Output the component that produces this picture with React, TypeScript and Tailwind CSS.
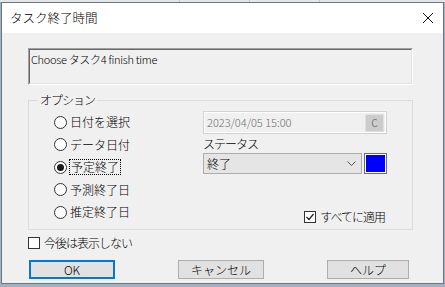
// TaskFinishDialog — ダイアログ「タスク終了時間」
import type { ReactNode } from 'react';

const FONT = '"Noto Sans CJK JP", "Liberation Sans", sans-serif';

function Radio({ label, checked, focus }: { label: string; checked?: boolean; focus?: boolean }) {
  return (
    <div className="flex h-[22.5px] items-center">
      <span className="grid h-[13px] w-[13px] shrink-0 place-items-center rounded-full border border-[#333333] bg-white">
        {checked && <span className="h-[7px] w-[7px] rounded-full bg-[#1a1a1a]" />}
      </span>
      <span
        className={
          focus
            ? 'ml-[2px] border border-dotted border-black px-[1px] text-[12px] font-light leading-[14px] text-black'
            : 'ml-[3px] text-[12px] font-light leading-[14px] text-black'
        }
      >
        {label}
      </span>
    </div>
  );
}

function Check({ checked, children }: { checked?: boolean; children: ReactNode }) {
  return (
    <div className="flex items-center">
      <span className="grid h-[12px] w-[12px] shrink-0 place-items-center border border-[#333333] bg-white">
        {checked && (
          <svg width="10" height="10" viewBox="0 0 10 10">
            <path d="M1.5 5 L4 7.5 L8.5 2" fill="none" stroke="#222" strokeWidth="1.2" />
          </svg>
        )}
      </span>
      <span className="ml-[4px] text-[12px] font-light leading-[14px] tracking-[-1px] text-black">{children}</span>
    </div>
  );
}

function Btn({ label, primary, w }: { label: string; primary?: boolean; w: string }) {
  return (
    <div
      className={
        (primary ? 'border-2 border-[#0078d7] ' : 'border border-[#adadad] ') +
        'grid h-[19px] place-items-center bg-[#e1e1e1] text-[12px] font-light leading-[14px] text-black ' +
        w
      }
    >
      {label}
    </div>
  );
}

export default function App() {
  return (
    <div className="flex h-[287px] w-[445px] flex-col bg-[#a3b0c0]" style={{ fontFamily: FONT }}>
      {/* 背景のアプリ */}
      <div className="flex h-[2px] bg-[#e6e6e6]">
        <div className="w-[180px] border-r border-[#c8c8c8]" />
        <div className="w-[70px] border-r border-[#c8c8c8]" />
        <div className="w-[70px] border-r border-[#c8c8c8]" />
      </div>

      <div className="ml-[1px] flex h-[282px] w-[443px] flex-col border border-[#6b7684] bg-[#f0f0f0]">
        {/* タイトルバー */}
        <div className="flex h-[30px] items-center justify-between bg-white pl-[8px] pr-[9px]">
          <span className="text-[12.5px] font-light leading-[14px] text-black">タスク終了時間</span>
          <svg width="12" height="12" viewBox="0 0 12 12">
            <path d="M1 1 L11 11 M11 1 L1 11" stroke="#111" strokeWidth="1" />
          </svg>
        </div>

        <div className="flex flex-col pl-[26px] pt-[15px]">
          {/* 説明 */}
          <div className="h-[37px] w-[385px] border border-b-white border-l-[#a0a0a0] border-r-white border-t-[#a0a0a0]">
            <div className="h-full w-full border border-b-[#e3e3e3] border-l-[#696969] border-r-[#e3e3e3] border-t-[#696969] bg-[#f0f0f0] pl-[1px] pt-[2px] text-[11px] font-light leading-[14px] tracking-[-0.3px] text-black">
              Choose タスク4 finish time
            </div>
          </div>

          {/* オプション */}
          <fieldset className="mt-[7px] w-[385px] border border-[#dcdcdc] pb-[5px]">
            <legend className="ml-[9px] px-[2px] text-[12px] font-light leading-[16px] tracking-[-1px] text-black">オプション</legend>
            <div className="flex pt-[3px]">
              <div className="flex w-[174px] flex-col pl-[25px]">
                <Radio label="日付を選択" />
                <Radio label="データ日付" />
                <Radio label="予定終了" checked focus />
                <Radio label="予測終了日" />
                <Radio label="推定終了日" />
              </div>
              <div className="flex w-[184px] flex-col">
                <div className="flex h-[23px] items-center justify-between border border-[#d2d2d2] bg-[#f0f0f0] pl-[3px] pr-[2px] outline outline-1 -outline-offset-2 outline-white">
                  <span className="text-[11px] font-light leading-[13px] text-[#6d6d6d]">2023/04/05 15:00</span>
                  <span className="grid h-[18px] w-[19px] place-items-center border border-[#e0e0e0] bg-[#cccccc] text-[10px] leading-[12px] text-[#7a7a7a]">
                    C
                  </span>
                </div>
                <span className="mt-[3px] text-[12px] font-light leading-[14px] tracking-[-1px] text-black">ステータス</span>
                <div className="mt-[2px] flex h-[21px] items-center">
                  <div className="flex h-full w-[160px] items-center justify-between border border-[#adadad] bg-[#e5e5e5] pl-[3px] pr-[5px]">
                    <span className="text-[12px] font-light leading-[14px] text-black">終了</span>
                    <svg width="9" height="6" viewBox="0 0 9 6">
                      <path d="M0.5 0.5 L4.5 4.5 L8.5 0.5" fill="none" stroke="#555" strokeWidth="1" />
                    </svg>
                  </div>
                  <div className="ml-[2px] h-full w-[23px] border border-[#6e6e6e] bg-white p-[1px]">
                    <div className="h-full w-full bg-[#0000ff]" />
                  </div>
                </div>
                <div className="mt-[36px] flex justify-end pr-[2px]">
                  <Check checked>すべてに適用</Check>
                </div>
              </div>
            </div>
          </fieldset>

          <div className="mt-[6px]">
            <Check>今後は表示しない</Check>
          </div>

          {/* ボタン */}
          <div className="ml-[1px] mt-[10px] flex gap-[63px]">
            <Btn label="OK" primary w="w-[86px]" />
            <Btn label="キャンセル" w="w-[86px]" />
            <Btn label="ヘルプ" w="w-[82px]" />
          </div>
        </div>
      </div>
    </div>
  );
}
